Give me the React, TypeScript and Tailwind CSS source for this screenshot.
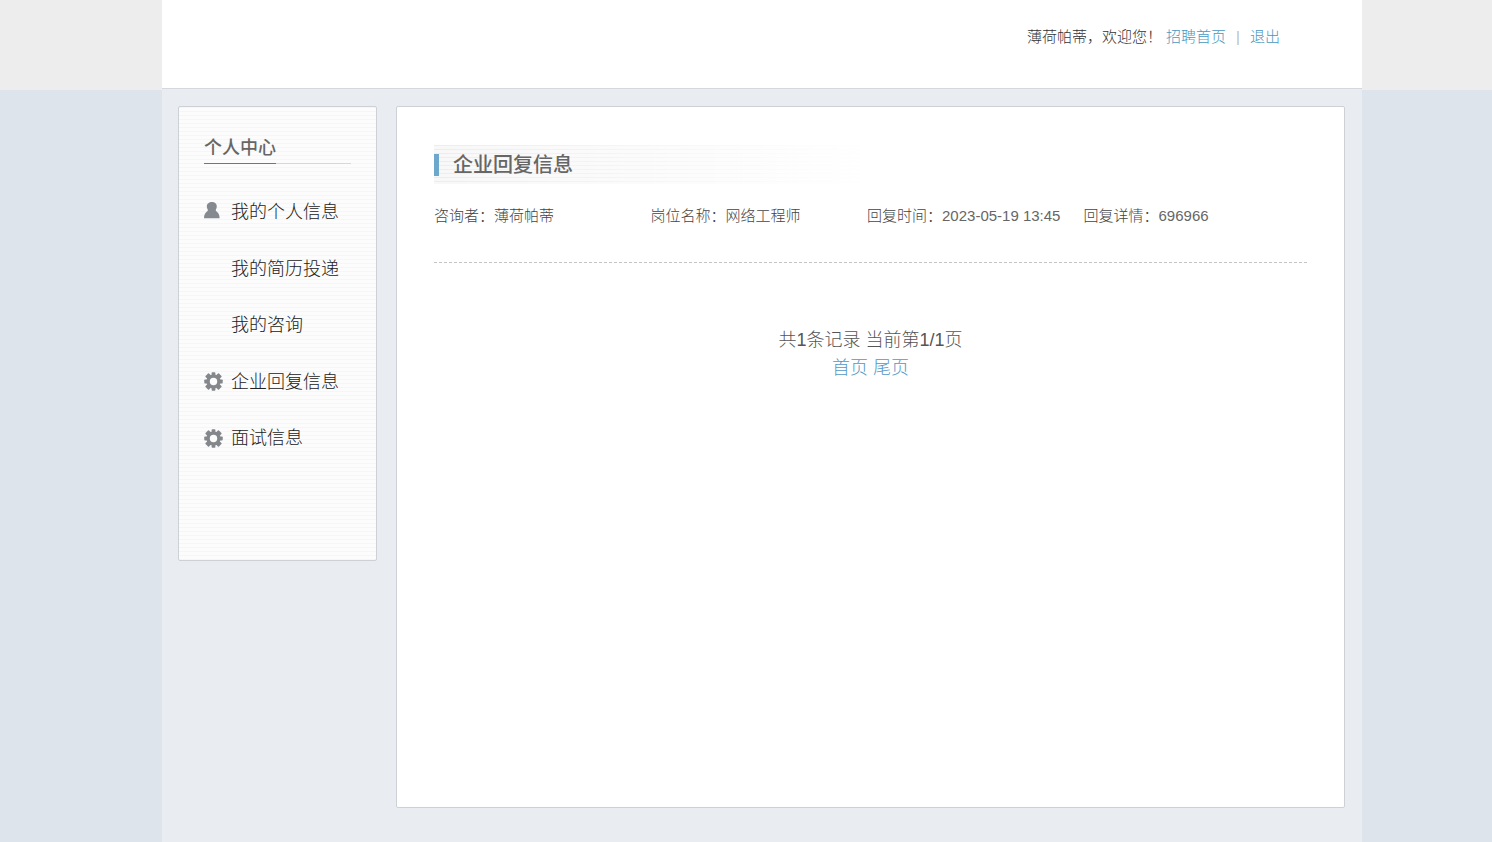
const menu = [
  { label: '我的个人信息', icon: 'person' },
  { label: '我的简历投递', icon: '' },
  { label: '我的咨询', icon: '' },
  { label: '企业回复信息', icon: 'gear' },
  { label: '面试信息', icon: 'gear' },
];

const reply = [
  { term: '咨询者', value: '薄荷帕蒂' },
  { term: '岗位名称', value: '网络工程师' },
  { term: '回复时间', value: '2023-05-19 13:45' },
  { term: '回复详情', value: '696966' },
];

function PersonIcon() {
  return (
    <svg className="-mt-[3px]" width="16" height="17" viewBox="0 0 16 17" fill="#858990" aria-hidden="true">
      <path d="M8 0C5 0 2.800 1.600 2.800 4.600c0 1.200.3 2 .9 3 .3.7.2 1.200-.4 1.700C1.200 10.700 0 12.800 0 16.300h15.600c0-3.500-1.200-5.600-3.300-7-.6-.5-.7-1-.4-1.700.6-1 .9-1.800.9-3C12.800 1.600 11 0 8 0Z" />
    </svg>
  );
}

function GearIcon() {
  return (
    <svg width="19" height="19" viewBox="0 0 20 20" aria-hidden="true">
      <g fill="#84878b">
        <rect x="8" y="0.300" width="4" height="19.400" rx="0.800" />
        <rect x="0.300" y="8" width="19.400" height="4" rx="0.800" />
        <rect x="7.400" y="0" width="5.200" height="20" rx="0.800" transform="rotate(45 10 10)" />
        <rect x="7.400" y="0" width="5.200" height="20" rx="0.800" transform="rotate(-45 10 10)" />
        <circle cx="10" cy="10" r="7.400" />
      </g>
      <circle cx="10" cy="10" r="3.900" fill="#fcfcfc" />
    </svg>
  );
}

export default function App() {
  return (
    <div className="min-h-screen bg-[linear-gradient(#ededed_90px,#dde4ec_90px)] pl-8 font-['Liberation_Sans','Noto_Sans_CJK_SC',sans-serif] font-light text-[#555]" lang="zh-CN">
      <div className="mx-auto flex min-h-screen max-w-[1200px] flex-col bg-[#e9ecf1]">
        <header className="flex h-[89px] items-start justify-end border-b border-[#d4d7db] bg-white pt-[25px] pr-[82px] text-[15px] leading-6">
          <span className="mr-1 text-[#333]">薄荷帕蒂，欢迎您！</span>
          <a href="#home" className="text-[#4a97c0]">招聘首页</a>
          <span className="mx-[10px] text-[#bbb]">|</span>
          <a href="#logout" className="text-[#4a97c0]">退出</a>
        </header>

        <div className="flex items-start pt-[17px] pr-[17px] pb-[34px] pl-4">
          <aside className="min-h-[455px] w-[199px] shrink-0 rounded-xs border border-[#cdd0d4] bg-[#fcfcfc] bg-[repeating-linear-gradient(#f6f6f6_0_1px,#fcfcfc_1px_4px)] px-[25px] pt-[26px]">
            <h2 className="flex border-b border-[#d8d8d8] text-lg leading-[30px] font-medium text-[#666]">
              <span className="-mb-px border-b border-[#3489bc]">个人中心</span>
            </h2>
            <nav aria-label="个人中心">
              <ul className="mt-[34px] flex h-[254px] flex-col justify-between">
                {menu.map((item) => (
                  <li key={item.label}>
                    <a href="#menu" className="flex h-7 items-center text-lg leading-7 whitespace-nowrap text-[#222]">
                      <span className="w-[27px] shrink-0">
                        {item.icon === 'person' && <PersonIcon />}
                        {item.icon === 'gear' && <GearIcon />}
                      </span>
                      {item.label}
                    </a>
                  </li>
                ))}
              </ul>
            </nav>
          </aside>

          <main className="ml-[19px] min-h-[702px] min-w-0 flex-1 rounded-xs border border-[#cdd0d4] bg-white px-[37px] pt-[38px]">
            <div className="flex h-[39px] items-center bg-[linear-gradient(to_right,transparent,#fff_50%),repeating-linear-gradient(#ededed_0_1px,#f8f8f8_1px_4px)]">
              <h1 className="border-l-[5px] border-[#6fa6cc] pl-[14px] text-xl leading-[22px] font-medium text-[#666]">企业回复信息</h1>
            </div>
            <dl className="grid h-[79px] grid-cols-4 border-b border-dashed border-[#c4c4c4] pt-5 pr-[7px] text-[15px] leading-6">
              {reply.map((field) => (
                <div key={field.term} className="flex whitespace-nowrap">
                  <dt className="text-[#444]">{field.term}：</dt>
                  <dd className={/^\d/.test(field.value) ? 'text-[#666]' : 'text-[#444]'}>{field.value}</dd>
                </div>
              ))}
            </dl>
            <div className="mt-[63px] text-center text-lg leading-7">
              <p>共1条记录 当前第1/1页</p>
              <nav aria-label="分页">
                <a href="#first" className="text-[#5597c6]">首页</a>{' '}
                <a href="#last" className="text-[#5597c6]">尾页</a>
              </nav>
            </div>
          </main>
        </div>
      </div>
    </div>
  );
}
